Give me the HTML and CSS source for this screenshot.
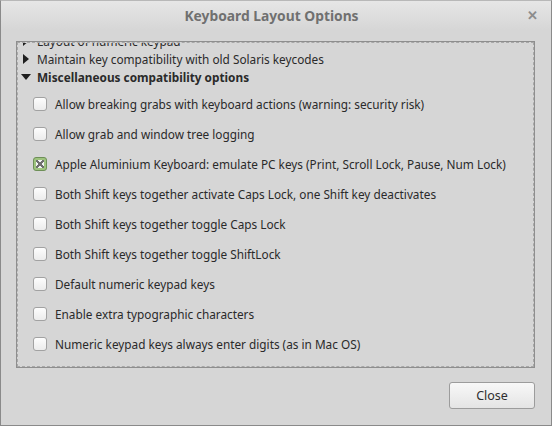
FILE: index.html
```html
<!DOCTYPE html>
<html lang="en">
    <head>
        <meta charset="utf-8">
        <title>Keyboard Layout Options</title>
        <link rel="stylesheet" href="styles.css">
    </head>
    <body>
        <div class="window">
            <header class="titlebar">
                <h1>Keyboard Layout Options</h1>
                <span class="close-x">&#x2715;</span>
            </header>

            <div class="content">
                <div class="frame">
                    <div class="viewport">
                        <ul class="tree">
                            <li class="node"><span class="arrow right"></span>Layout of numeric keypad</li>
                            <li class="node"><span class="arrow right"></span>Maintain key compatibility with old Solaris keycodes</li>
                            <li class="node open"><span class="arrow down"></span>Miscellaneous compatibility options</li>
                        </ul>
                        <ul class="options">
                            <li><span class="check"></span>Allow breaking grabs with keyboard actions (warning: security risk)</li>
                            <li><span class="check"></span>Allow grab and window tree logging</li>
                            <li><span class="check checked"></span>Apple Aluminium Keyboard: emulate PC keys (Print, Scroll Lock, Pause, Num Lock)</li>
                            <li><span class="check"></span>Both Shift keys together activate Caps Lock, one Shift key deactivates</li>
                            <li><span class="check"></span>Both Shift keys together toggle Caps Lock</li>
                            <li><span class="check"></span>Both Shift keys together toggle ShiftLock</li>
                            <li><span class="check"></span>Default numeric keypad keys</li>
                            <li><span class="check"></span>Enable extra typographic characters</li>
                            <li><span class="check"></span>Numeric keypad keys always enter digits (as in Mac OS)</li>
                        </ul>
                    </div>
                </div>

                <div class="actions">
                    <button type="button" class="btn">Close</button>
                </div>
            </div>
        </div>
    </body>
</html>
```

FILE: styles.css
```css
body {
    margin: 0;
    padding: 0;
    font-family: "Noto Sans", "Open Sans", sans-serif;
    font-size: 11.8px;
    color: #2a2a2a;
}

.window {
    width: 552px;
    height: 426px;
    box-sizing: border-box;
    border: 1px solid #8a8a8a;
    border-top-color: #b8b8b8;
    background: #d6d6d6;
}

.titlebar {
    position: relative;
    height: 29px;
    padding-right: 9px;
    display: flex;
    align-items: center;
    justify-content: center;
    background: linear-gradient(#e6e6e6, #d6d6d6);
}

.titlebar h1 {
    margin: 0;
    font-size: 13.8px;
    font-weight: bold;
    color: #707070;
}

.close-x {
    position: absolute;
    right: 13px;
    top: 6px;
    font-size: 12.5px;
    font-weight: bold;
    color: #8c8c8c;
}

.content {
    padding: 11px 16px 0 15px;
}

.frame {
    height: 325px;
    border: 1px solid #8e8e8e;
}

.viewport {
    height: 323px;
    border: 1px dashed #a8a8a8;
    overflow: hidden;
}

.tree, .options {
    list-style: none;
    margin: 0;
    padding: 0;
}

.tree {
    margin-top: -11px;
}

.node {
    display: flex;
    align-items: center;
    height: 18px;
    padding-left: 3px;
    white-space: nowrap;
}

.node.open {
    font-weight: bold;
}

.arrow {
    width: 0;
    height: 0;
    flex: none;
}

.arrow.right {
    border-top: 5px solid transparent;
    border-bottom: 5px solid transparent;
    border-left: 6px solid #1e1e1e;
    margin-left: 2px;
    margin-right: 8px;
}

.arrow.down {
    border-left: 5px solid transparent;
    border-right: 5px solid transparent;
    border-top: 6px solid #1e1e1e;
    margin-right: 6px;
}

.options {
    padding-top: 3px;
}

.options li {
    display: flex;
    align-items: center;
    height: 30px;
    padding-left: 15px;
    white-space: nowrap;
}

.check {
    width: 12px;
    height: 12px;
    margin-right: 8px;
    border: 1px solid #a2a2a2;
    border-radius: 3px;
    background: linear-gradient(#fdfdfd, #ececec);
    flex: none;
}

.check.checked {
    border-color: #6e8f58;
    background: #9fc47f;
    position: relative;
}

.check.checked::after {
    content: "";
    position: absolute;
    left: 2px;
    top: 2px;
    width: 8px;
    height: 8px;
    background:
        linear-gradient(45deg, transparent 38%, #6f6f6f 38%, #6f6f6f 62%, transparent 62%),
        linear-gradient(-45deg, transparent 38%, #6f6f6f 38%, #6f6f6f 62%, transparent 62%),
        #f4f4f4;
}

.actions {
    display: flex;
    justify-content: flex-end;
    padding-top: 14px;
}

.btn {
    width: 86px;
    height: 27px;
    font-family: inherit;
    font-size: 12.5px;
    color: #2e2e2e;
    border: 1px solid #9c9c9c;
    border-radius: 3px;
    background: linear-gradient(#f8f8f8, #e4e4e4);
}
```
